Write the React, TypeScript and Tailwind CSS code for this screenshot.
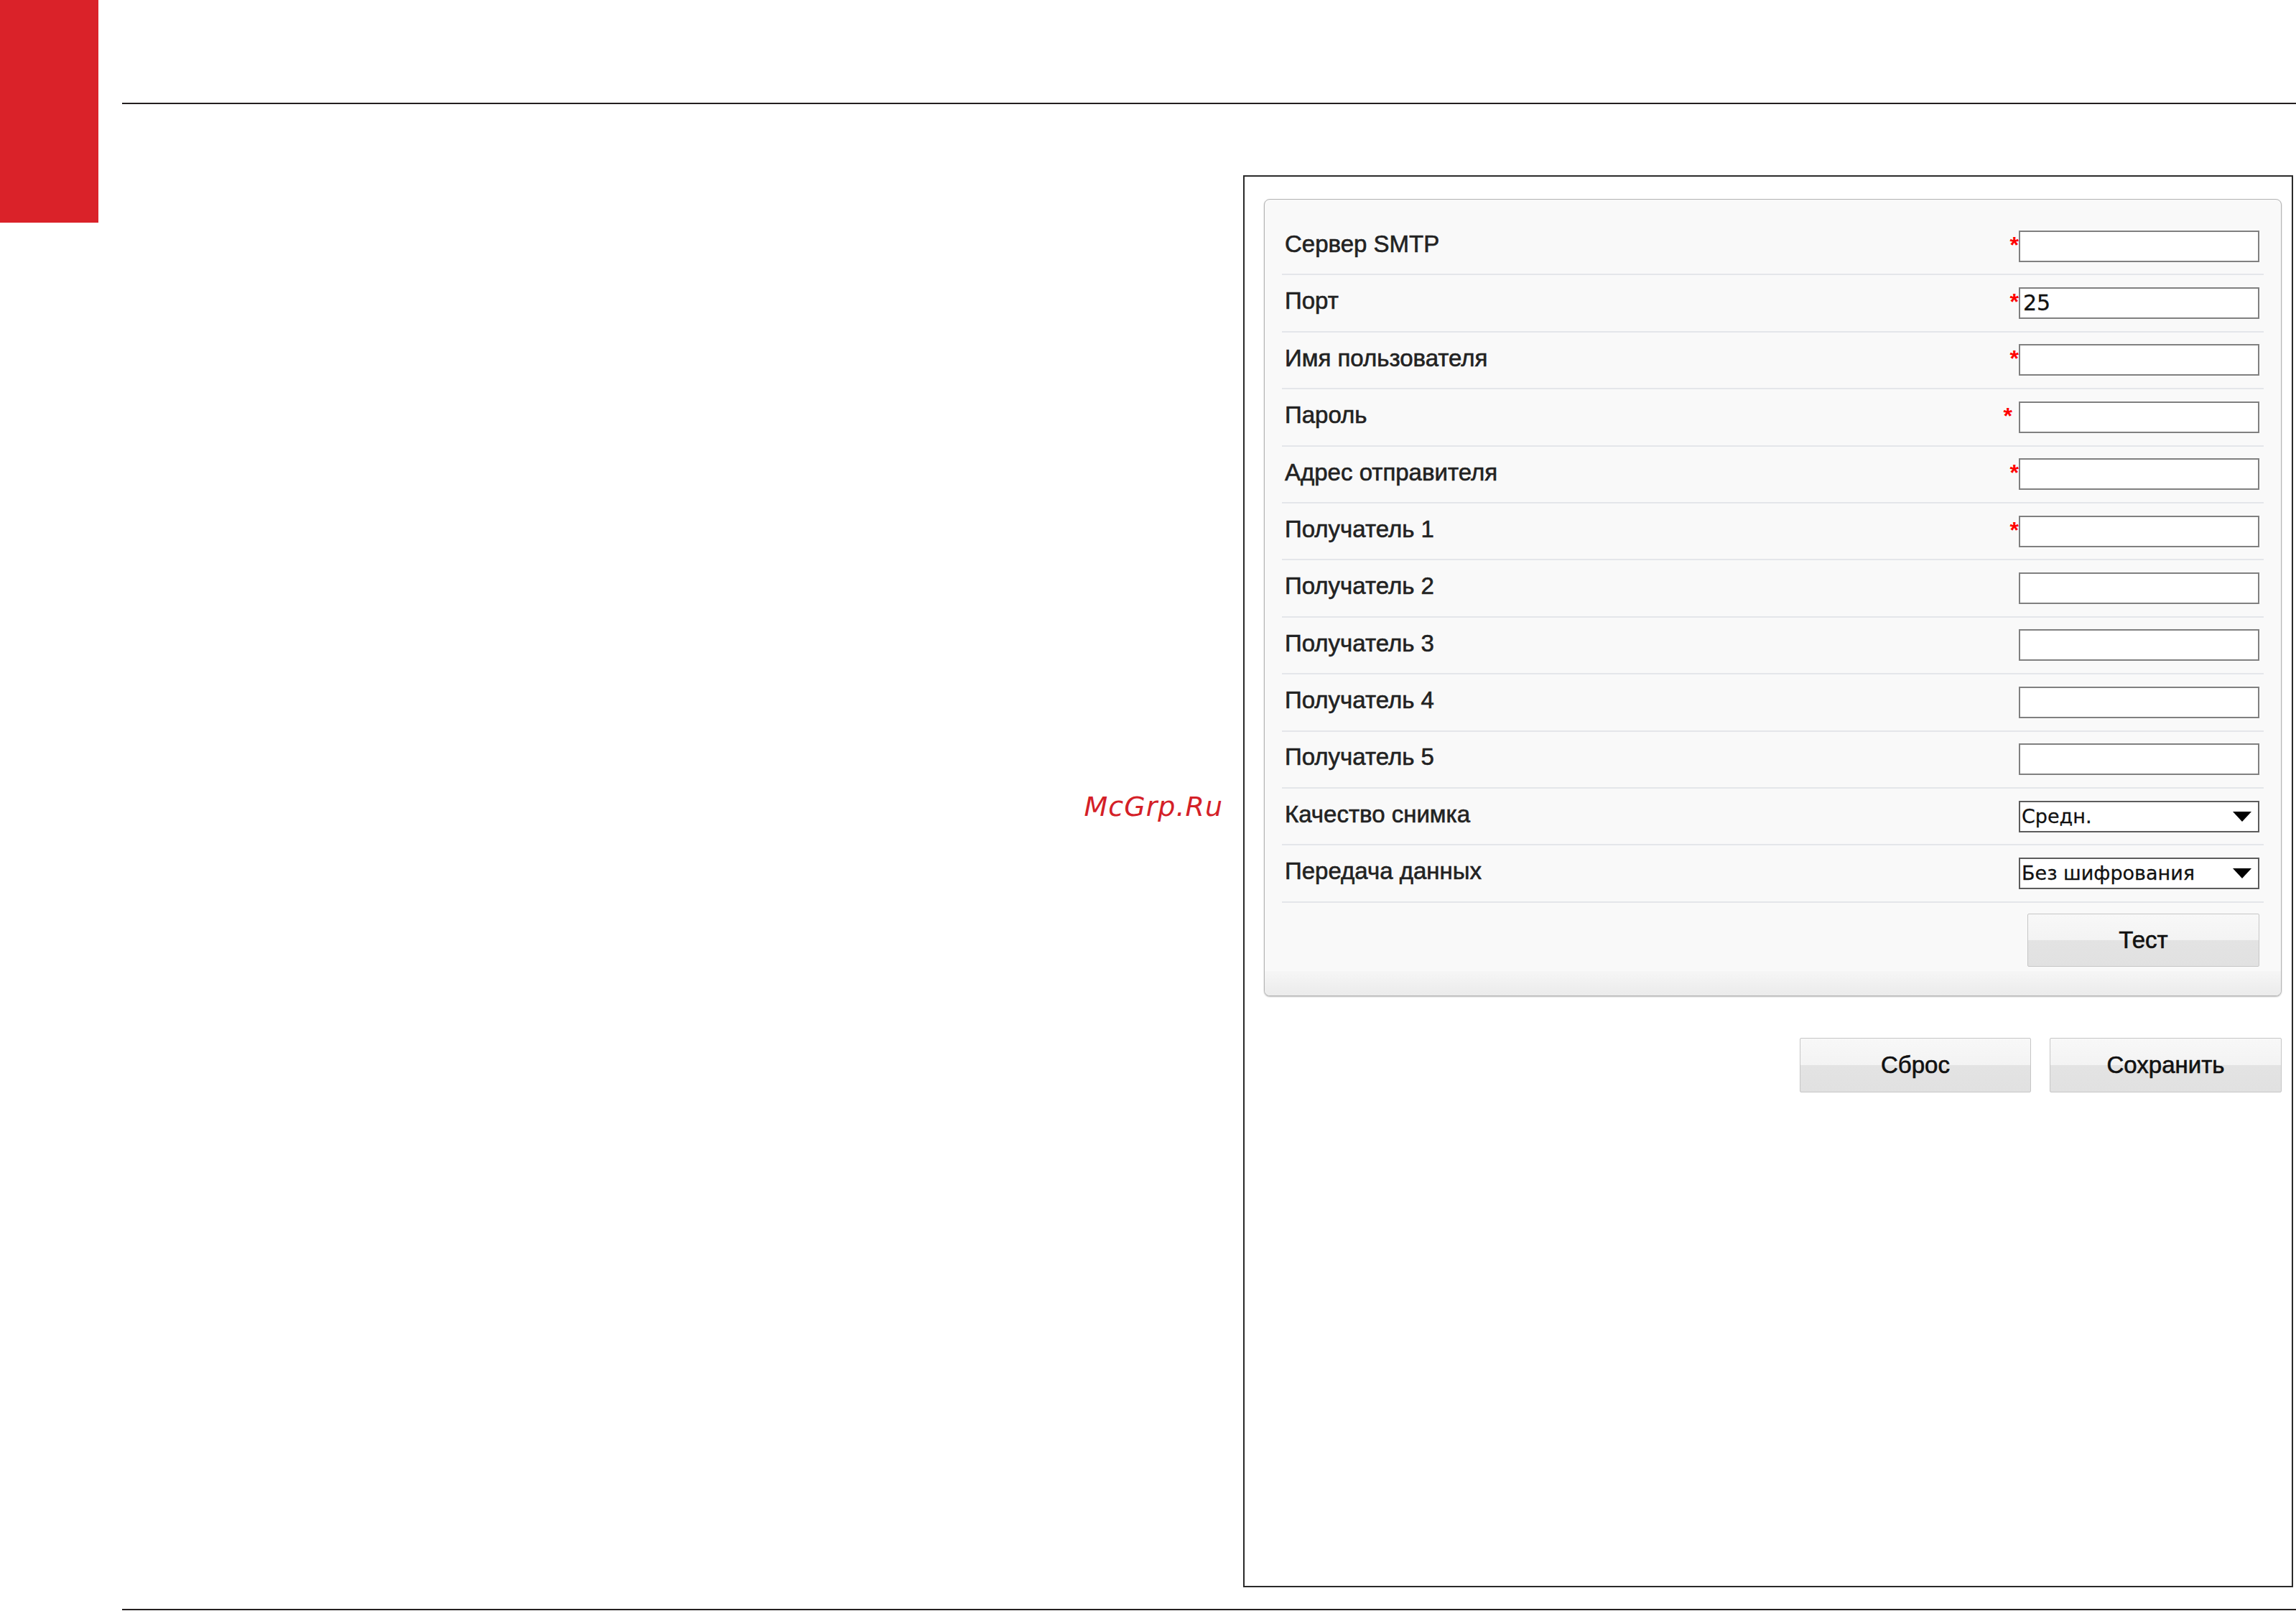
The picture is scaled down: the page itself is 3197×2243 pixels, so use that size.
import React from "react";

type Row = {
  label: string;
  required?: boolean;
  value?: string;
  select?: string;
  starGap?: boolean;
};

const rows: Row[] = [
  { label: "Сервер SMTP", required: true },
  { label: "Порт", required: true, value: "25" },
  { label: "Имя пользователя", required: true },
  { label: "Пароль", required: true, starGap: true },
  { label: "Адрес отправителя", required: true },
  { label: "Получатель 1", required: true },
  { label: "Получатель 2" },
  { label: "Получатель 3" },
  { label: "Получатель 4" },
  { label: "Получатель 5" },
  { label: "Качество снимка", select: "Средн." },
  { label: "Передача данных", select: "Без шифрования" },
];

const btn =
  "flex items-center justify-center rounded-[2px] border border-[#c6c6c6] bg-[linear-gradient(to_bottom,#f8f8f8_0%,#f3f3f3_50%,#e3e3e3_50%,#e1e1e1_100%)] text-[33px] text-[#111] [-webkit-text-stroke:0.6px_#111] font-['Liberation_Sans',Arial,sans-serif]";

function Field({ row }: { row: Row }) {
  if (row.select) {
    return (
      <div className="flex h-[44px] w-[335px] items-center justify-between border-2 border-[#5c5c5c] bg-white pl-[2px] pr-[9px]">
        <span className="font-['DejaVu_Sans',sans-serif] text-[27px] leading-none text-[#111] [-webkit-text-stroke:0.3px_#111]">
          {row.select}
        </span>
        <svg width="26" height="14" viewBox="0 0 26 14">
          <path d="M0 0 H26 L13 14 Z" fill="#000" />
        </svg>
      </div>
    );
  }
  return (
    <div className="flex h-[44px] w-[335px] items-center border-2 border-[#808080] bg-white pl-[4px]">
      {row.value && (
        <span className="font-['DejaVu_Sans',sans-serif] text-[30px] leading-none text-[#111] [-webkit-text-stroke:0.3px_#111]">
          {row.value}
        </span>
      )}
    </div>
  );
}

export default function App() {
  return (
    <div className="flex h-[2243px] w-[3197px] overflow-hidden bg-white font-['Liberation_Sans',Arial,sans-serif]">
      <div className="h-[310px] w-[137px] shrink-0 bg-[#da2229]" />
      <div className="ml-[33px] flex flex-1 flex-col">
        <div className="h-[143px]" />
        <div className="h-[2px] bg-[#231f20]" />
        <div className="flex pt-[99px]">
          <div className="w-[1561px] pr-[28px] pt-[860px] text-right">
            <span className="font-['DejaVu_Sans',sans-serif] text-[38px] italic leading-none tracking-[1px] text-[#d42027]">
              McGrp.Ru
            </span>
          </div>
          <div className="h-[1966px] w-[1462px] border-2 border-[#2a2a2a] pl-[27px] pr-[14px] pt-[31px]">
            <div className="overflow-hidden rounded-[8px] border border-[#b4b4b4] bg-[#f9f9f9] shadow-[0_1px_2px_rgba(0,0,0,0.25)]">
              <div className="px-[24px] pt-[26px]">
                {rows.map((row) => (
                  <div
                    key={row.label}
                    className="flex h-[79.4px] items-center justify-between border-b-2 border-[#e4e6ea] pl-[4px] pr-[6px]"
                  >
                    <span className="mb-[6px] text-[33px] text-[#222] [-webkit-text-stroke:0.6px_#222]">
                      {row.label}
                    </span>
                    <div className="flex items-start">
                      {row.required && (
                        <span
                          className={
                            row.starGap
                              ? "mr-[9px] mt-[4px] text-[32px] font-bold leading-none text-[#ff0000]"
                              : "mr-0 mt-[4px] text-[32px] font-bold leading-none text-[#ff0000]"
                          }
                        >
                          *
                        </span>
                      )}
                      <Field row={row} />
                    </div>
                  </div>
                ))}
                <div className="flex justify-end pr-[6px] pt-[15px]">
                  <div className={btn + " h-[74px] w-[323px]"}>Тест</div>
                </div>
              </div>
              <div className="mt-[6px] h-[34px] bg-linear-to-b from-[#f6f6f6] to-[#ebebeb]" />
            </div>
            <div className="mt-[58px] flex justify-end gap-[26px]">
              <div className={btn + " h-[76px] w-[322px]"}>Сброс</div>
              <div className={btn + " h-[76px] w-[323px]"}>Сохранить</div>
            </div>
          </div>
        </div>
        <div className="mt-[30px] h-[2px] bg-[#231f20]" />
      </div>
    </div>
  );
}
